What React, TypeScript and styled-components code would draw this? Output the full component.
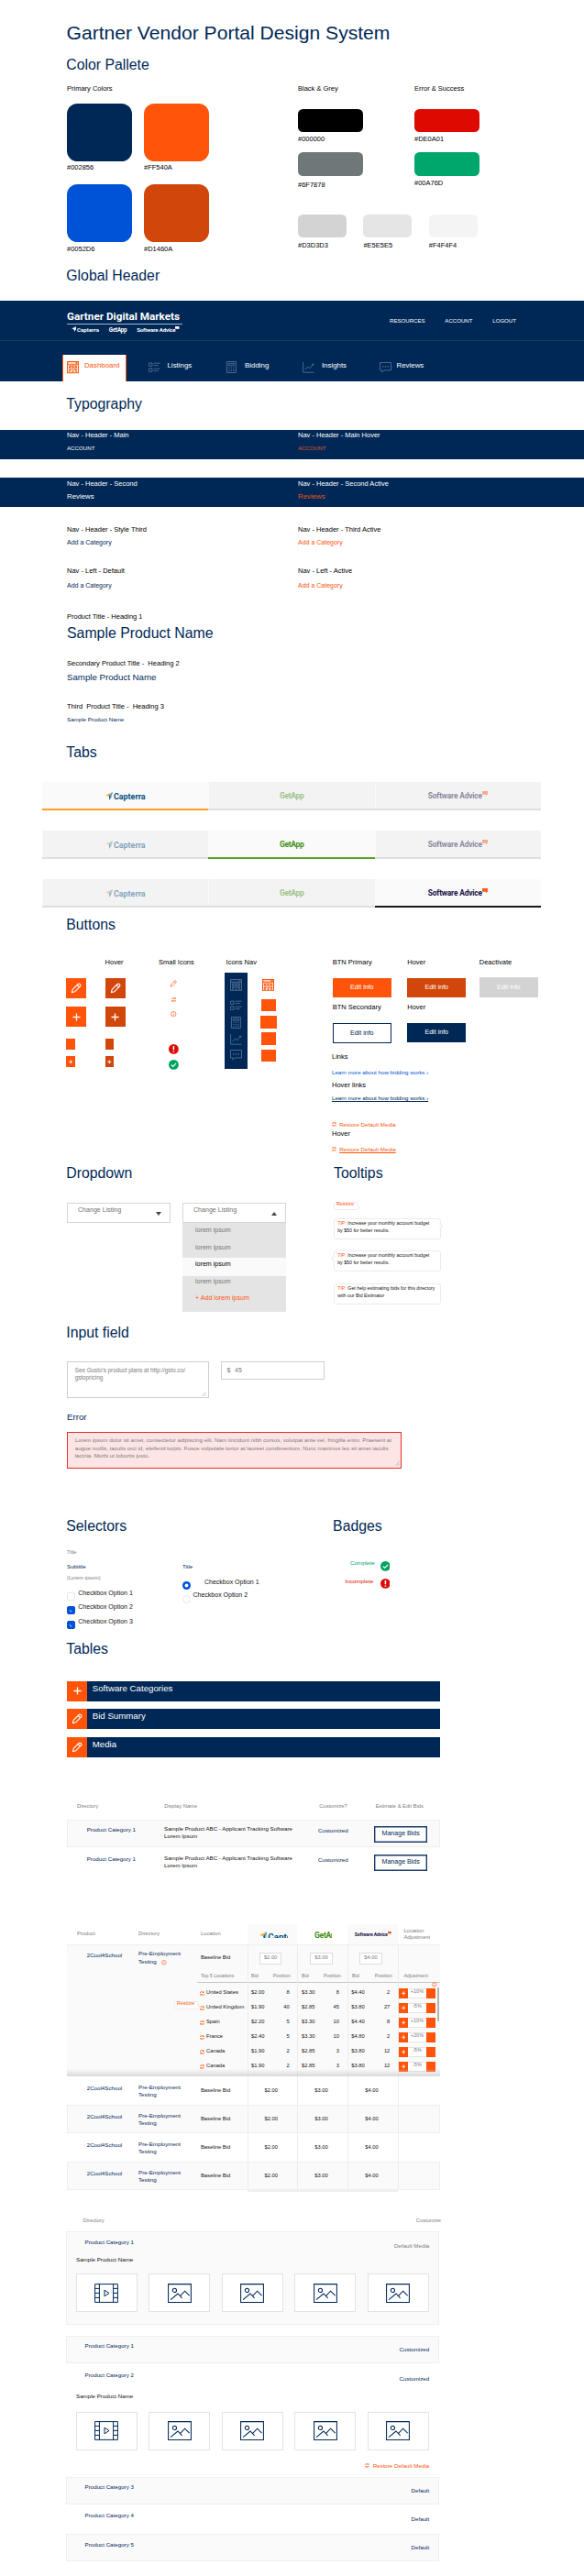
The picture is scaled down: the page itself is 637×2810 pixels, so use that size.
import React from "react";
import styled, { createGlobalStyle, css } from "styled-components";

const c = {
  navy: "#002856",
  orange: "#ff540a",
  blue: "#0052d6",
  rust: "#d1460a",
  black: "#000000",
  red: "#de0a01",
  green: "#00a76d",
  mute: "#7c7c7c",
  ink: "#111111",
  panel: "#fafafa",
  rule: "#efefef",
};

const GlobalStyle = createGlobalStyle`
  body { margin: 0; background: #fff; }
  * { box-sizing: border-box; }
`;

const Page = styled.main`
  width: 637px;
  height: 2810px;
  overflow: hidden;
  background: #fff;
  font-family: "Liberation Sans", Arial, sans-serif;
  display: flex;
  flex-direction: column;
`;

/* ---------- type ---------- */

const Title = styled.h1`
  margin: 23px 0 -0.6px 72.5px;
  font-size: 21.1px;
  line-height: 26px;
  font-weight: 400;
  color: ${c.navy};
  white-space: nowrap;
`;

const Heading = styled.h2<{ $mt?: number; $w?: number }>`
  margin: ${(p) => (p.$mt ?? 0) + 0.7}px 0 -0.7px 72.3px;
  font-size: 15.8px;
  line-height: 20px;
  font-weight: 400;
  color: ${c.navy};
  white-space: nowrap;
  ${(p) => p.$w && `width: ${p.$w}px;`}
`;

const HeadingRow = styled.div<{ $mt?: number }>`
  display: flex;
  margin-top: ${(p) => p.$mt ?? 0}px;
  h2 + h2 {
    margin-left: 0;
  }
`;

type TextProps = {
  $size?: number;
  $color?: string;
  $mt?: number;
  $lh?: number;
  $underline?: boolean;
};
const Text = styled.span<TextProps>`
  display: block;
  flex: none;
  margin-top: ${(p) => (p.$mt ?? 0) + 0.4}px;
  margin-bottom: -0.4px;
  font-size: ${(p) => p.$size ?? 6.2}px;
  line-height: ${(p) => p.$lh ?? 10}px;
  color: ${(p) => p.$color ?? c.navy};
  white-space: pre;
  text-decoration: ${(p) => (p.$underline ? "underline" : "none")};
  text-decoration-thickness: 0.5px;
  text-underline-offset: 1px;
`;

const Label = styled(Text).attrs<TextProps>((p) => ({
  $size: 7.5,
  $color: p.$color ?? c.black,
}))``;

/* ---------- colour palette ---------- */

const Palette = styled.div`
  display: flex;
  margin: 11.9px 0 0 73px;
  height: 198.8px;
`;
const PrimaryColumn = styled.div`
  width: 252px;
`;
const PrimaryGrid = styled.div`
  display: grid;
  grid-template-columns: 70.5px 70.5px;
  column-gap: 13.5px;
  row-gap: 13.1px;
  margin-top: 11.3px;
`;
const Chip = styled.div<{ $bg: string; $large?: boolean; $mt?: number }>`
  margin-top: ${(p) => p.$mt ?? 0}px;
  height: ${(p) => (p.$large ? 62.5 : 25.3)}px;
  width: 100%;
  background: ${(p) => p.$bg};
  border-radius: ${(p) => (p.$large ? 11.5 : 5.5)}px;
`;
const PairColumns = styled.div`
  display: grid;
  grid-template-columns: 71px 70.5px;
  column-gap: 56px;
  height: 141.8px;
`;
const LightRow = styled.div`
  display: grid;
  grid-template-columns: repeat(3, 53px);
  column-gap: 18.4px;
`;

/* ---------- global header ---------- */

const HeaderBar = styled.header`
  margin-top: 17px;
  height: 88.2px;
  background: ${c.navy};
`;
const HeaderTop = styled.div`
  height: 44.4px;
  padding: 0 74px 0 73px;
  border-bottom: 1px solid #173a66;
  display: flex;
  justify-content: space-between;
`;
const Brand = styled.div`
  width: 126px;
  padding-top: 9px;
`;
const BrandName = styled.div`
  font: 700 11.7px/16px Roboto, sans-serif;
  letter-spacing: 0.02px;
  color: #fff;
  white-space: nowrap;
  border-bottom: 1px solid #a9b5c5;
`;
const BrandLogos = styled.div`
  display: flex;
  justify-content: space-between;
  padding: 2px 3px 0 5px;
  align-items: flex-start;
`;
const TopLinks = styled.nav`
  width: 138px;
  padding-top: 17px;
  display: flex;
  justify-content: space-between;
`;
const NavRow = styled.nav`
  display: flex;
  align-items: flex-end;
  height: 43.8px;
  padding-left: 68.3px;
`;
const NavItem = styled.a<{ $active?: boolean; $icon: number }>`
  display: flex;
  height: 29px;
  width: 84px;
  padding-top: 6.8px;
  svg {
    display: block;
    margin: 1px ${(p) => p.$icon - 13}px 0 0;
  }
  ${(p) =>
    p.$active &&
    css`
      width: 69.7px;
      margin-right: 24.5px;
      padding-left: 4px;
      background: #fff;
      border: solid ${c.orange};
      border-width: 0 1px;
    `}
`;

/* ---------- typography ---------- */

const Band = styled.div<{ $mt: number }>`
  margin-top: ${(p) => p.$mt}px;
  height: 32.6px;
  padding: 1.5px 0 0 73px;
  background: ${c.navy};
  display: grid;
  grid-template-columns: 252px 1fr;
  align-content: start;
`;
const Specimens = styled.div<{ $mt: number }>`
  margin-top: ${(p) => p.$mt}px;
  padding-left: 73px;
  display: grid;
  grid-template-columns: 252px 1fr;
`;

/* ---------- brand tabs ---------- */

const TabStrip = styled.div<{ $mt: number }>`
  display: grid;
  grid-template-columns: 181.2px 181.5px 181px;
  margin: ${(p) => p.$mt}px 0 0 46.3px;
  height: 31px;
`;
const Tab = styled.div<{ $line: string; $on?: boolean }>`
  background: ${(p) => (p.$on ? "#fafafa" : "#f3f3f3")};
  border-bottom: 2px solid ${(p) => (p.$on ? p.$line : "#dfdfdf")};
  box-shadow: ${(p) => (p.$on ? "none" : "inset 1px 0 #fafafa")};
  display: flex;
  justify-content: center;
  padding-top: 10px;
  > * {
    opacity: ${(p) => (p.$on ? 1 : 0.48)};
  }
`;
const LogoMark = styled.div<{ $size: number; $color: string; $ls?: number }>`
  display: flex;
  align-items: flex-start;
  flex: none;
  font-family: Roboto, sans-serif;
  font-weight: 700;
  font-size: ${(p) => p.$size}px;
  line-height: ${(p) => p.$size * 1.4}px;
  letter-spacing: ${(p) => p.$ls ?? 0}px;
  color: ${(p) => p.$color};
  white-space: nowrap;
  svg {
    flex: none;
  }
`;

/* ---------- buttons ---------- */

const ButtonsBody = styled.div`
  display: flex;
  margin-top: 26.2px;
  height: 224.8px;
  padding-left: 72.3px;
`;
const Column = styled.div<{ $w: number; $pt?: number }>`
  width: ${(p) => p.$w}px;
  padding-top: ${(p) => p.$pt ?? 0}px;
  flex: none;
`;
const IconButton = styled.div<{ $hover?: boolean; $small?: boolean; $mt: number }>`
  margin-top: ${(p) => p.$mt}px;
  width: ${(p) => (p.$small ? 9.6 : 22)}px;
  height: ${(p) => (p.$small ? 12 : 22)}px;
  background: ${(p) => (p.$hover ? c.rust : c.orange)};
  display: flex;
  align-items: center;
  justify-content: center;
`;
const LabelSpace = styled.div`
  height: 10px;
`;
const Slot = styled.div<{ $h: number; $mt?: number }>`
  height: ${(p) => p.$h}px;
  margin-top: ${(p) => p.$mt ?? 0}px;
  width: 33px;
  display: flex;
  align-items: center;
  justify-content: center;
`;
const NavIcons = styled.div`
  display: flex;
  margin: 6.6px 0 0 -1.2px;
`;
const NavPanel = styled.div`
  width: 24.4px;
  height: 105px;
  padding-top: 2.3px;
  background: ${c.navy};
  ${Slot} {
    width: 24.4px;
  }
`;
const NavActive = styled.div`
  margin-left: 14.2px;
  width: 18px;
  padding-top: 6.6px;
  display: flex;
  flex-direction: column;
  align-items: center;
`;
const NavSquare = styled.div<{ $w: number; $mt: number }>`
  width: ${(p) => p.$w}px;
  height: 13.7px;
  margin-top: ${(p) => p.$mt}px;
  background: ${c.orange};
`;
const ButtonGrid = styled.div`
  display: grid;
  grid-template-columns: 81.5px 78.5px 64px;
  margin-left: 0.8px;
`;
const Button = styled.button<{ $bg: string; $fg?: string; $mt: number }>`
  display: flex;
  justify-content: center;
  align-items: flex-start;
  margin: ${(p) => p.$mt}px 0 0;
  padding: 4.6px 0 0;
  width: 64px;
  height: 21.9px;
  border: 1px solid ${(p) => p.$fg ?? p.$bg};
  background: ${(p) => p.$bg};
  color: ${(p) => p.$fg ?? "#fff"};
  font: 400 7.1px/10px "Liberation Sans", Arial, sans-serif;
`;
const IconText = styled.div<{ $mt: number; $gap?: number }>`
  display: flex;
  margin-top: ${(p) => p.$mt}px;
  align-items: center;
  gap: ${(p) => p.$gap ?? 3.4}px;
`;

/* ---------- dropdown + tooltips ---------- */

const DropdownBody = styled.div`
  display: flex;
  height: 154px;
  padding: 21.1px 0 0 73px;
`;
const SelectColumn = styled.div`
  margin-top: 1.7px;
  width: 126px;
`;
const Select = styled.div`
  display: flex;
  justify-content: space-between;
  width: 113px;
  height: 21.7px;
  border: 1px solid #d6d6d6;
  padding: 1.2px 9px 0 11px;
`;
const Caret = styled.i<{ $up?: boolean }>`
  width: 0;
  height: 0;
  margin-top: 7.5px;
  border: 3px solid transparent;
  ${(p) =>
    p.$up
      ? "border-top: 0; border-bottom: 4px solid #444;"
      : "border-bottom: 0; border-top: 4px solid #444;"}
`;
const Menu = styled.div`
  width: 113px;
  height: 97.3px;
  background: #e4e4e4;
`;
const MenuItem = styled.div<{ $h: number; $pt: number; $on?: boolean }>`
  height: ${(p) => p.$h}px;
  padding: ${(p) => p.$pt}px 0 0 14px;
  background: ${(p) => (p.$on ? "#fafafa" : "transparent")};
`;
const Tooltips = styled.div`
  margin-left: 38.6px;
`;
const Tip = styled.div<{ $tail: "left" | "right" | "top"; $mt?: number; $small?: boolean }>`
  position: relative;
  margin-top: ${(p) => p.$mt ?? 0}px;
  width: ${(p) => (p.$small ? 27 : 117)}px;
  height: ${(p) => (p.$small ? 9.6 : 23.6)}px;
  padding: ${(p) => (p.$small ? "0 0 0 2.3px" : "1px 0 0 3.6px")};
  border: 1px solid #ececec;
  border-radius: 3px;
  background: #fff;
  &::after {
    content: "";
    position: absolute;
    width: ${(p) => (p.$small ? 2.6 : 4.4)}px;
    height: ${(p) => (p.$small ? 2.6 : 4.4)}px;
    background: #fff;
    border: solid #ececec;
    border-width: 1px 1px 0 0;
    ${(p) =>
      p.$tail === "right" &&
      `right: ${p.$small ? -2 : -3}px; top: ${p.$small ? 3 : 5}px; transform: rotate(45deg);`}
    ${(p) => p.$tail === "left" && "left: -3px; top: 5px; transform: rotate(-135deg);"}
    ${(p) => p.$tail === "top" && "left: 91px; top: -3px; transform: rotate(-45deg);"}
  }
`;
const TipWord = styled.b`
  font-weight: 400;
  color: ${c.orange};
`;
const TipLabel = styled(Text)`
  margin-top: -2px;
`;

/* ---------- inputs ---------- */

const Fields = styled.div`
  display: flex;
  gap: 13.8px;
  align-items: flex-start;
  margin: 21.8px 0 0 73px;
`;
const TextArea = styled.div<{ $error?: boolean; $w: number }>`
  display: flex;
  justify-content: space-between;
  width: ${(p) => p.$w}px;
  height: 40px;
  padding: ${(p) => (p.$error ? 3.5 : 4.8)}px 1.5px 1.5px 7.7px;
  border: 1px solid ${(p) => (p.$error ? "#e5302a" : "#cfcfcf")};
  background: ${(p) => (p.$error ? "#fce5e4" : "#fff")};
  > svg {
    align-self: flex-end;
  }
`;
const Money = styled.div`
  display: flex;
  gap: 4.6px;
  width: 112.4px;
  height: 19.6px;
  padding: 3.6px 0 0 5.2px;
  border: 1px solid #cfcfcf;
`;
const ErrorBlock = styled.div`
  margin: 14.3px 0 0 73px;
  display: grid;
  row-gap: 10.4px;
`;

/* ---------- selectors ---------- */

const SelectorsBody = styled.div`
  display: flex;
  height: 114px;
  padding-left: 73px;
`;
const OptionRow = styled.div<{ $h: number; $gap: number }>`
  display: flex;
  align-items: flex-start;
  height: ${(p) => p.$h}px;
  gap: ${(p) => p.$gap}px;
`;
const CheckBox = styled.span<{ $on?: boolean }>`
  flex: none;
  width: 9.3px;
  height: 9.3px;
  margin-top: 4.4px;
  border-radius: 2px;
  border: 1px solid ${(p) => (p.$on ? c.blue : "#e6e6e6")};
  background: ${(p) => (p.$on ? c.blue : "#fff")};
  svg {
    display: block;
  }
`;
const Radio = styled.span<{ $on?: boolean }>`
  flex: none;
  width: 9px;
  height: 9px;
  margin-top: 4.9px;
  border-radius: 50%;
  border: 1px solid #e6e6e6;
  background: #fff;
  ${(p) => p.$on && `border: 0; background: radial-gradient(#fff 1.7px, ${c.blue} 2.3px);`}
`;
const BadgeRow = styled.div<{ $gap: number }>`
  display: flex;
  justify-content: flex-end;
  width: 62.3px;
  height: 19.4px;
  gap: ${(p) => p.$gap}px;
  svg {
    display: block;
    margin-top: 3.2px;
  }
`;

/* ---------- title bars ---------- */

const TitleBars = styled.div`
  display: grid;
  row-gap: 8.3px;
  margin: 25.5px 0 0 73px;
  width: 407px;
`;
const TitleBar = styled.div`
  display: flex;
  gap: 5.7px;
  height: 22.2px;
  background: ${c.navy};
`;

/* ---------- directory table ---------- */

const TableHead = styled.div`
  display: grid;
  grid-template-columns: 106.3px 169px 61.4px 70px;
  margin: 47.8px 0 10px 73px;
`;
const DirectoryRow = styled.div<{ $shade?: boolean }>`
  display: grid;
  grid-template-columns: 105px 168px 61px 71px;
  margin: 0 0 0.6px 73px;
  width: 407px;
  height: 30.7px;
  padding-top: 5.5px;
  border: 1px solid ${(p) => (p.$shade ? c.rule : "transparent")};
  background: ${(p) => (p.$shade ? c.panel : "#fff")};
`;
const Inset = styled.div<{ $l?: number; $t?: number }>`
  padding: ${(p) => p.$t ?? 0}px 0 0 ${(p) => p.$l ?? 0}px;
`;
const ManageButton = styled.button`
  display: flex;
  justify-content: center;
  align-items: flex-start;
  margin: 0.6px 0 0;
  padding: 2.1px 0 0;
  width: 58.4px;
  height: 18px;
  border: 1px solid #1b3c6c;
  box-shadow: inset 0 0 0 0.4px #1b3c6c;
  background: #fff;
  color: ${c.navy};
  font: 400 7.08px/10px "Liberation Sans", Arial, sans-serif;
`;

/* ---------- bids table ---------- */

const BidTable = styled.div`
  margin: 51.7px 0 0 73px;
  width: 407px;
`;
const bidCols = "50.5px 54.3px 55.4px 54.5px 46.3px";
const BidHeader = styled.div`
  display: grid;
  grid-template-columns: 78px 68px ${bidCols};
  height: 22.7px;
`;
const LogoCell = styled.div<{ $shade?: boolean; $l: number; $t?: number }>`
  background: ${(p) => (p.$shade ? c.panel : "#fff")};
  padding: ${(p) => p.$t ?? 7.3}px 0 0 ${(p) => p.$l}px;
`;
const LogoClip = styled.div<{ $w: number; $h: number }>`
  width: ${(p) => p.$w}px;
  height: ${(p) => p.$h}px;
  overflow: hidden;
`;
const Expanded = styled.div`
  position: relative;
  display: grid;
  grid-template-columns: 78px 68px 261px;
  height: 144px;
  overflow: hidden;
  background: ${c.panel};
  border-top: 1px solid ${c.rule};
`;
const BidCells = styled.div<{ $h: number }>`
  display: grid;
  grid-template-columns: ${bidCols};
  height: ${(p) => p.$h}px;
  > * + * {
    border-left: 1px solid #ededed;
  }
`;
const Underline = styled.div`
  height: 1px;
  margin-left: -4px;
  background: #c8c8c8;
`;
const PairCell = styled.div<{ $l: number; $r: number; $t: number }>`
  display: flex;
  justify-content: space-between;
  padding: ${(p) => p.$t}px ${(p) => p.$r}px 0 ${(p) => p.$l}px;
`;
const BidInput = styled.div`
  width: 24.4px;
  height: 13.4px;
  border: 1px solid #dcdcdc;
  background: #fff;
  display: flex;
  justify-content: center;
`;
const NameCell = styled.div`
  display: flex;
  gap: 1.6px;
  padding-top: 4px;
  margin-left: -0.6px;
  svg {
    margin-top: 4.6px;
    flex: none;
  }
`;
const Stepper = styled.div`
  display: grid;
  grid-template-columns: 9.7px 20.3px 9.8px;
  padding: 5.4px 0 0 0.4px;
  align-items: start;
`;
const StepEnd = styled.div`
  height: 11.4px;
  background: ${c.orange};
  display: flex;
  align-items: center;
  justify-content: center;
`;
const StepValue = styled.div`
  height: 11.4px;
  border: solid #e4e4e4;
  border-width: 1px 0;
  background: #fff;
  display: flex;
  justify-content: center;
`;
const ScrollThumb = styled.div`
  position: absolute;
  right: 1.3px;
  top: 46px;
  width: 2px;
  height: 37px;
  background: #b4b4b4;
  border-radius: 1px;
`;
const Fade = styled.div`
  position: absolute;
  left: 0;
  right: 0;
  bottom: 0;
  height: 8px;
  background: linear-gradient(rgba(215, 215, 215, 0), rgba(215, 215, 215, 0.95));
`;
const BidRow = styled.div<{ $shade?: boolean }>`
  display: grid;
  grid-template-columns: 78px 68px 261px;
  height: 31px;
  background: ${(p) => (p.$shade ? c.panel : "#fff")};
  box-shadow: ${(p) => (p.$shade ? `inset 0 0 0 1px ${c.rule}` : "none")};
`;
const PriceCell = styled.div`
  display: flex;
  justify-content: center;
  padding: 9px 3px 0 0;
`;
const ColumnFoot = styled.div`
  width: 164px;
  height: 2px;
  margin-left: 196.5px;
  background: #efefef;
`;
const InlineIcon = styled.span`
  display: inline-block;
  margin-left: 5.4px;
  vertical-align: -2.6px;
  height: 6px;
  svg {
    display: block;
  }
`;

/* ---------- media table ---------- */

const MediaHead = styled.div`
  display: flex;
  justify-content: space-between;
  width: 390.4px;
  margin: 25px 0 0 90.6px;
`;
const MediaPanel = styled.div<{ $shade?: boolean; $mt: number; $h: number }>`
  margin: ${(p) => p.$mt}px 0 0 72px;
  width: 406.8px;
  height: ${(p) => p.$h}px;
  padding: 5.3px 9.6px 0 10px;
  border: 1px solid ${(p) => (p.$shade ? c.rule : "transparent")};
  background: ${(p) => (p.$shade ? c.panel : "#fff")};
`;
const MediaTitle = styled.div`
  display: flex;
  justify-content: space-between;
  height: 14px;
  padding-left: 9.6px;
  > :last-child {
    margin-top: 4.3px;
  }
`;
const Thumbs = styled.div<{ $mt: number }>`
  display: grid;
  grid-template-columns: repeat(5, 66.6px);
  column-gap: 12.9px;
  margin-top: ${(p) => p.$mt}px;
`;
const Thumb = styled.div`
  height: 41.8px;
  border: 1px solid #e3e3e3;
  background: #fff;
  display: flex;
  align-items: center;
  justify-content: center;
`;
const RestoreRow = styled(IconText)`
  justify-content: flex-end;
`;

/* ---------- icons ---------- */

const Plus = ({ size = 9, w = 1.4 }) => (
  <svg width={size} height={size} viewBox="0 0 10 10" stroke="#fff" strokeWidth={w} fill="none">
    <path d="M5 .5v9M.5 5h9" />
  </svg>
);
const Pencil = ({ size = 12, color = "#fff", w = 1.1 }) => (
  <svg width={size} height={size} viewBox="0 0 12 12" stroke={color} strokeWidth={w} fill="none" strokeLinejoin="round">
    <path d="M1.4 10.6l.8-3.2 5.9-5.9c.6-.6 1.4-.6 2 0l.4.4c.6.6.6 1.4 0 2L4.6 9.8zM7.2 2.5l2.3 2.3" />
  </svg>
);
const Refresh = ({ size = 6 }) => (
  <svg width={size} height={size} viewBox="0 0 12 12" stroke={c.orange} strokeWidth="1.9" fill="none">
    <path d="M1.2 5V3.6c0-1 .7-1.6 1.6-1.6H9M10.8 7v1.4c0 1-.7 1.6-1.6 1.6H3" />
    <path d="M10.8.2v4.4H6.4zM1.2 11.8V7.4h4.4z" fill={c.orange} stroke="none" />
  </svg>
);
const Info = ({ size = 6.4 }) => (
  <svg width={size} height={size} viewBox="0 0 12 12" stroke={c.orange} strokeWidth="1.2" fill="none">
    <circle cx="6" cy="6" r="5.2" />
    <path d="M6 5.2V9M6 2.9v1.3" strokeWidth="1.3" />
  </svg>
);
const Alert = () => (
  <svg width="10.8" height="10.8" viewBox="0 0 12 12">
    <circle cx="6" cy="6" r="6" fill={c.red} />
    <path d="M6 2.2v4.7M6 8.2v1.6" stroke="#fff" strokeWidth="1.7" />
  </svg>
);
const Tick = () => (
  <svg width="10.8" height="10.8" viewBox="0 0 12 12">
    <circle cx="6" cy="6" r="6" fill="#00a25f" />
    <path d="M3.1 6.2l2.1 2.1 3.8-4" stroke="#fff" strokeWidth="1.3" fill="none" />
  </svg>
);
const DashboardIcon = ({ color = "#5c789b", w = 0.9 }) => (
  <svg width="13" height="13.4" viewBox="0 0 13 13.4" stroke={color} strokeWidth={w} fill="none">
    <path d="M.6.6h11.8v12.2H.6zM.6 3.2h11.8M9.6 1.9h1.6M2 5h9M2 6.4h2.4M5.4 6.4h2.2M8.6 6.4H11M2 8h9M2 9.6h2.6M6 9.6h1.4M8.4 9.6H11M2 11.2h2M5.2 11.2h2.6M9 11.2h2" />
  </svg>
);
const ListIcon = ({ color = "#5c789b" }) => (
  <svg width="13" height="13" viewBox="0 0 13 13" stroke={color} strokeWidth=".8" fill="none">
    <path d="M.6 2h3.4v3.4H.6zM.6 8h3.4v3.4H.6zM5.6 2.2h7M5.6 4.6h5M5.6 8.2h7M5.6 10.6h5" />
  </svg>
);
const CalcIcon = ({ color = "#5c789b" }) => (
  <svg width="13" height="13" viewBox="0 0 13 13" stroke={color} strokeWidth=".8" fill="none">
    <path d="M1.4.5h10v12h-10zM3.2 2.3h6.4v2H3.2zM3.2 6.2h1.4M5.7 6.2h1.4M8.2 6.2h1.4M3.2 8.4h1.4M5.7 8.4h1.4M3.2 10.6h1.4M5.7 10.6h1.4M8.9 7.8v3.2" />
  </svg>
);
const ChartIcon = ({ color = "#5c789b" }) => (
  <svg width="13" height="13" viewBox="0 0 13 13" stroke={color} strokeWidth=".8" fill="none">
    <path d="M.6 1v11.2h12M2.6 9.4l3-3.4 2 1.8 4-4.4M10 3.2h1.8v1.8" />
  </svg>
);
const ChatIcon = ({ color = "#5c789b" }) => (
  <svg width="13" height="13" viewBox="0 0 13 13" stroke={color} strokeWidth=".8" fill="none">
    <path d="M.5 1.5h12v8.4H5L2.8 12V9.9H.5z" />
    <path d="M3 5.8h1.3M5.8 5.8h1.3M8.6 5.8h1.3" strokeWidth="1.2" />
  </svg>
);
const Grip = () => (
  <svg width="5" height="5" viewBox="0 0 5 5" stroke="#999" strokeWidth=".6">
    <path d="M.4 4.8L4.8.4M2.8 4.8l2-2" />
  </svg>
);
const FilmIcon = () => (
  <svg width="26" height="21" viewBox="0 0 26 21" stroke={c.navy} strokeWidth="1" fill="none">
    <path d="M.6.6h24.8v19.8H.6zM5.4.6v19.8M20.6.6v19.8M.6 5.4h4.8M.6 10.4h4.8M.6 15.4h4.8M20.6 5.4h4.8M20.6 10.4h4.8M20.6 15.4h4.8M11 7.2v6.6l5-3.3z" />
  </svg>
);
const PictureIcon = () => (
  <svg width="26" height="21" viewBox="0 0 26 21" stroke={c.navy} strokeWidth="1.05" fill="none">
    <path d="M.6.6h24.8v19.8H.6zM3 17.6L11 11l4.6 4.8M13.4 13.6L18.6 8.2l5 5" />
    <circle cx="7.4" cy="7.4" r="2.1" />
  </svg>
);
const Arrow = ({ size, mono }: { size: number; mono?: boolean }) => (
  <svg width={size * 0.87} height={size} viewBox="0 0 8.7 10">
    <path d="M0 4L8.7 0 4.4 5z" fill={mono ? "#fff" : "#ff9d28"} />
    <path d="M8.7 0L3.8 4.9l1.6 1z" fill={mono ? "#fff" : "#68c5ed"} />
    <path d="M8.7 0L5 10 4.4 5.2z" fill={mono ? "#fff" : "#044d80"} />
    <path d="M8.7 0L7.4 7 5.4 5.2z" fill={mono ? "#fff" : "#68c5ed"} />
  </svg>
);
const Bubble = ({ size, color = "#fc5d1f" }: { size: number; color?: string }) => (
  <svg width={size} height={size * 0.85} viewBox="0 0 10 8.5">
    <path d="M0 0h10v6H8v2.5L5.4 6H0z" fill={color} />
  </svg>
);

/* ---------- logos ---------- */

const CapterraMark = styled(LogoMark)`
  gap: ${(p) => p.$size * 0.1}px;
  svg {
    margin-top: ${(p) => p.$size * 0.13}px;
  }
`;
const CapterraLogo = ({ size = 8.9, mono = false }) => (
  <CapterraMark $size={size} $color={mono ? "#fff" : "#044d80"} $ls={mono ? 0.05 : 0}>
    <Arrow size={size * 1.02} mono={mono} />
    <span>Capterra</span>
  </CapterraMark>
);
const GetAppLogo = ({ size = 8.5, mono = false }) => (
  <LogoMark $size={size} $color={mono ? "#fff" : "#3f8f0f"} $ls={-0.35 * (size / 8.5)}>
    GetApp
  </LogoMark>
);
const AdviceLogo = ({ size = 8.4, mono = false }) => (
  <LogoMark $size={size} $color={mono ? "#fff" : "#150f45"} $ls={-0.02 * size}>
    <span>Software Advice</span>
    <Bubble size={size * 0.75} color={mono ? "#fff" : undefined} />
  </LogoMark>
);

/* ---------- data ---------- */

const locations: [string, string, string, string, string, string, string, string][] = [
  ["United States", "$2.00", "8", "$3.30", "8", "$4.40", "2", "+10%"],
  ["United Kingdom", "$1.90", "40", "$2.85", "45", "$3.80", "27", "-5%"],
  ["Spain", "$2.20", "5", "$3.30", "10", "$4.40", "8", "+10%"],
  ["France", "$2.40", "5", "$3.30", "10", "$4.80", "2", "+20%"],
  ["Canada", "$1.90", "2", "$2.85", "3", "$3.80", "12", "-5%"],
  ["Canada", "$1.90", "2", "$2.85", "3", "$3.80", "12", "-5%"],
  ["Canada", "$1.90", "2", "$2.85", "3", "$3.80", "12", "-5%"],
];

const Swatch = ({ hex, large, mt, gap }: { hex: string; large?: boolean; mt?: number; gap: number }) => (
  <div>
    <Chip $bg={hex} $large={large} $mt={mt} />
    <Label $mt={gap}>{hex.toUpperCase()}</Label>
  </div>
);

const BrandTabs = ({ active, mt }: { active: number; mt: number }) => (
  <TabStrip $mt={mt}>
    <Tab $on={active === 0} $line="#ff9d28"><CapterraLogo /></Tab>
    <Tab $on={active === 1} $line="#5ba32b"><GetAppLogo /></Tab>
    <Tab $on={active === 2} $line="#1b1525"><AdviceLogo /></Tab>
  </TabStrip>
);

const RestoreLink = ({ mt, underline }: { mt: number; underline?: boolean }) => (
  <IconText $mt={mt}>
    <Refresh size={4.8} />
    <Text $color={c.orange} $underline={underline}>Restore Default Media</Text>
  </IconText>
);

const TipCard = ({ tail, mt, lines }: { tail: "left" | "right" | "top"; mt: number; lines: [string, string] }) => (
  <Tip $tail={tail} $mt={mt}>
    <Text $size={5.25} $lh={7.6} $color={c.ink}>
      <TipWord>TIP:</TipWord> {lines[0]}
      {"\n" + lines[1]}
    </Text>
  </Tip>
);

const MediaRow = ({ n, state, shade, mt }: { n: number; state: string; shade?: boolean; mt: number }) => (
  <MediaPanel $mt={mt} $h={30.5} $shade={shade}>
    <MediaTitle>
      <Text>Product Category {n}</Text>
      <Text>{state}</Text>
    </MediaTitle>
  </MediaPanel>
);

const ThumbRow = ({ mt }: { mt: number }) => (
  <Thumbs $mt={mt}>
    <Thumb><FilmIcon /></Thumb>
    {[1, 2, 3, 4].map((i) => (
      <Thumb key={i}><PictureIcon /></Thumb>
    ))}
  </Thumbs>
);

export default function App() {
  return (
    <Page>
      <GlobalStyle />
      <Title>Gartner Vendor Portal Design System</Title>
      <Heading $mt={11.4}>Color Pallete</Heading>
      <Palette>
        <PrimaryColumn>
          <Label>Primary Colors</Label>
          <PrimaryGrid>
            <Swatch large hex="#002856" gap={2.4} />
            <Swatch large hex="#ff540a" gap={2.4} />
            <Swatch large hex="#0052d6" gap={2.9} />
            <Swatch large hex="#d1460a" gap={2.9} />
          </PrimaryGrid>
        </PrimaryColumn>
        <div>
          <PairColumns>
            <div>
              <Label>Black &amp; Grey</Label>
              <Swatch hex="#000000" mt={17.3} gap={2.8} />
              <Swatch hex="#6f7878" mt={9.2} gap={5.3} />
            </div>
            <div>
              <Label>Error &amp; Success</Label>
              <Swatch hex="#de0a01" mt={17.3} gap={2.8} />
              <Swatch hex="#00a76d" mt={9.2} gap={3.1} />
            </div>
          </PairColumns>
          <LightRow>
            <Swatch hex="#d3d3d3" gap={3.6} />
            <Swatch hex="#e5e5e5" gap={3.6} />
            <Swatch hex="#f4f4f4" gap={3.6} />
          </LightRow>
        </div>
      </Palette>

      <Heading>Global Header</Heading>
      <HeaderBar>
        <HeaderTop>
          <Brand>
            <BrandName>Gartner Digital Markets</BrandName>
            <BrandLogos>
              <CapterraLogo size={6.1} mono />
              <GetAppLogo size={6.3} mono />
              <AdviceLogo size={6} mono />
            </BrandLogos>
          </Brand>
          <TopLinks>
            <Text $size={6.1} $color="#fff">RESOURCES</Text>
            <Text $size={6.1} $color="#fff">ACCOUNT</Text>
            <Text $size={6.1} $color="#fff">LOGOUT</Text>
          </TopLinks>
        </HeaderTop>
        <NavRow>
          <NavItem $active $icon={18.6}>
            <DashboardIcon color={c.orange} w={1.1} />
            <Text $size={7.9} $color={c.orange}>Dashboard</Text>
          </NavItem>
          <NavItem $icon={20}>
            <ListIcon />
            <Text $size={7.9} $color="#fff">Listings</Text>
          </NavItem>
          <NavItem $icon={20.6}>
            <CalcIcon />
            <Text $size={7.9} $color="#fff">Bidding</Text>
          </NavItem>
          <NavItem $icon={20.4}>
            <ChartIcon />
            <Text $size={7.9} $color="#fff">Insights</Text>
          </NavItem>
          <NavItem $icon={18}>
            <ChatIcon />
            <Text $size={7.9} $color="#fff">Reviews</Text>
          </NavItem>
        </NavRow>
      </HeaderBar>

      <Heading $mt={14.8}>Typography</Heading>
      <Band $mt={18}>
        <Label $color="#fff">Nav - Header - Main</Label>
        <Label $color="#fff">Nav - Header - Main Hover</Label>
        <Text $size={6.17} $mt={3.9} $color="#fff">ACCOUNT</Text>
        <Text $size={6.17} $mt={3.9} $color="#e0541a">ACCOUNT</Text>
      </Band>
      <Band $mt={19.8}>
        <Label $color="#fff">Nav - Header - Second</Label>
        <Label $color="#fff">Nav - Header - Second Active</Label>
        <Text $size={7.85} $mt={3.9} $color="#fff">Reviews</Text>
        <Text $size={7.85} $mt={3.9} $color="#e0541a">Reviews</Text>
      </Band>
      <Specimens $mt={18.8}>
        <Label>Nav - Header - Style Third</Label>
        <Label>Nav - Header - Third Active</Label>
        <Text $size={7} $mt={4.2}>Add a Category</Text>
        <Text $size={7} $mt={4.2} $color={c.orange}>Add a Category</Text>
      </Specimens>
      <Specimens $mt={20.8}>
        <Label>Nav - Left - Default</Label>
        <Label>Nav - Left - Active</Label>
        <Text $size={7} $mt={6.2}>Add a Category</Text>
        <Text $size={7} $mt={6.2} $color={c.orange}>Add a Category</Text>
      </Specimens>
      <Specimens $mt={24.5}>
        <div>
          <Label>Product Title - Heading 1</Label>
          <Text $size={15.87} $lh={20} $mt={2.9}>Sample Product Name</Text>
          <Label $mt={18.1}>{"Secondary Product Title -  Heading 2"}</Label>
          <Text $size={9.7} $lh={12} $mt={3.8}>Sample Product Name</Text>
          <Label $mt={20.8}>{"Third  Product Title -  Heading 3"}</Label>
          <Text $size={6.2} $mt={4.2}>Sample Product Name</Text>
        </div>
      </Specimens>

      <Heading $mt={20.7}>Tabs</Heading>
      <BrandTabs active={0} mt={22.5} />
      <BrandTabs active={1} mt={21.8} />
      <BrandTabs active={2} mt={21.8} />

      <Heading $mt={8.9}>Buttons</Heading>
      <ButtonsBody>
        <Column $w={42.3}>
          <LabelSpace />
          <IconButton $mt={12.6}><Pencil /></IconButton>
          <IconButton $mt={9}><Plus /></IconButton>
          <IconButton $small $mt={13} />
          <IconButton $small $mt={7}><Plus size={4.6} w={2} /></IconButton>
        </Column>
        <Column $w={58.4}>
          <Label>Hover</Label>
          <IconButton $hover $mt={12.6}><Pencil /></IconButton>
          <IconButton $hover $mt={9}><Plus /></IconButton>
          <IconButton $hover $small $mt={13} />
          <IconButton $hover $small $mt={7}><Plus size={4.6} w={2} /></IconButton>
        </Column>
        <Column $w={73.6}>
          <Label>Small Icons</Label>
          <Slot $mt={10} $h={17.2}><Pencil size={8} color={c.orange} w={1} /></Slot>
          <Slot $h={17}><Refresh size={5} /></Slot>
          <Slot $h={14.2}><Info /></Slot>
          <Slot $mt={22} $h={19}><Alert /></Slot>
          <Slot $h={14.4}><Tick /></Slot>
        </Column>
        <Column $w={115.4}>
          <Label>Icons Nav</Label>
          <NavIcons>
            <NavPanel>
              <Slot $h={22}><DashboardIcon /></Slot>
              <Slot $h={22}><ListIcon /></Slot>
              <Slot $h={15.4}><CalcIcon /></Slot>
              <Slot $h={21.2}><ChartIcon /></Slot>
              <Slot $h={13.6}><ChatIcon /></Slot>
            </NavPanel>
            <NavActive>
              <DashboardIcon color={c.orange} w={1.2} />
              <NavSquare $w={16.4} $mt={8.3} />
              <NavSquare $w={18} $mt={5} />
              <NavSquare $w={16.4} $mt={4.3} />
              <NavSquare $w={16.4} $mt={4.6} />
            </NavActive>
          </NavIcons>
        </Column>
        <Column $w={230}>
          <ButtonGrid>
            <Label>BTN Primary</Label>
            <Label>Hover</Label>
            <Label>Deactivate</Label>
            <Button $bg={c.orange} $mt={11.9}>Edit info</Button>
            <Button $bg={c.rust} $mt={11.9}>Edit info</Button>
            <Button $bg="#d3d3d3" $mt={11.7}>Edit info</Button>
            <Label $mt={5.2}>BTN Secondary</Label>
            <Label $mt={5.2}>Hover</Label>
            <i />
            <Button $bg="#fff" $fg={c.navy} $mt={12.8}>Edit info</Button>
            <Button $bg={c.navy} $mt={11.9}>Edit info</Button>
          </ButtonGrid>
          <Label $mt={9.6}>Links</Label>
          <Text $mt={6.5} $color={c.blue}>Learn more about how bidding works ›</Text>
          <Label $mt={4.2}>Hover links</Label>
          <Text $mt={3.8} $underline>Learn more about how bidding works ›</Text>
          <RestoreLink mt={19.4} />
          <Label $mt={0.1}>Hover</Label>
          <RestoreLink mt={6.5} underline />
        </Column>
      </ButtonsBody>

      <HeadingRow>
        <Heading $w={291.7}>Dropdown</Heading>
        <Heading>Tooltips</Heading>
      </HeadingRow>
      <DropdownBody>
        <SelectColumn>
          <Select>
            <Text $size={7.07} $color="#707070">Change Listing</Text>
            <Caret />
          </Select>
        </SelectColumn>
        <SelectColumn>
          <Select>
            <Text $size={7.07} $color="#707070">Change Listing</Text>
            <Caret $up />
          </Select>
          <Menu>
            <MenuItem $h={19} $pt={2.8}><Text $size={7.1} $color="#757575">lorem ipsum</Text></MenuItem>
            <MenuItem $h={19} $pt={2.5}><Text $size={7.1} $color="#757575">lorem ipsum</Text></MenuItem>
            <MenuItem $h={20.3} $pt={1.8} $on><Text $size={7.1} $color={c.black}>lorem ipsum</Text></MenuItem>
            <MenuItem $h={18} $pt={0}><Text $size={7.1} $color="#757575">lorem ipsum</Text></MenuItem>
            <MenuItem $h={21} $pt={0}><Text $size={7.1} $color={c.orange}>+ Add lorem ipsum</Text></MenuItem>
          </Menu>
        </SelectColumn>
        <Tooltips>
          <Tip $tail="right" $small>
            <TipLabel $size={5.45} $lh={7} $color={c.orange}>Restore</TipLabel>
          </Tip>
          <TipCard tail="right" mt={8.4} lines={["Increase your monthly account budget", "by $50 for better results."]} />
          <TipCard tail="left" mt={11.5} lines={["Increase your monthly account budget", "by $50 for better results."]} />
          <TipCard tail="top" mt={12.4} lines={["Get help estimating bids for this directory", "with our Bid Estimator"]} />
        </Tooltips>
      </DropdownBody>

      <Heading>Input field</Heading>
      <Fields>
        <TextArea $w={154.5}>
          <Text $size={6.3} $lh={8} $color={c.mute}>{"See Gusto's product plans at http://gsto.co/\ngstopricing"}</Text>
          <Grip />
        </TextArea>
        <Money>
          <Text $size={7} $color="#757575">$</Text>
          <Text $size={7} $color="#757575">45</Text>
        </Money>
      </Fields>
      <ErrorBlock>
        <Text $size={9.7} $lh={12}>Error</Text>
        <TextArea $w={365} $error>
          <Text $size={6.2} $lh={8.7} $color={c.mute}>
            {"Lorem ipsum dolor sit amet, consectetur adipiscing elit. Nam tincidunt nibh cursus, volutpat ante vel, fringilla enim. Praesent at\naugue mollis, iaculis orci id, eleifend turpis. Fusce vulputate tortor at laoreet condimentum. Nunc maximus leo sit amet iaculis\nlacinia. Morbi ut lobortis justo."}
          </Text>
          <Grip />
        </TextArea>
      </ErrorBlock>

      <HeadingRow $mt={52.1}>
        <Heading $w={290.8}>Selectors</Heading>
        <Heading>Badges</Heading>
      </HeadingRow>
      <SelectorsBody>
        <Column $w={126} $pt={14}>
          <Text $size={5.6} $color={c.mute}>Title</Text>
          <Text $size={6.2} $mt={5.7}>Subtitle</Text>
          <Text $size={5.7} $mt={2.2} $color={c.mute}>(Lorem ipsum)</Text>
          <Inset $t={6.2}>
            {[1, 2, 3].map((n) => (
              <OptionRow key={n} $h={15.6} $gap={3}>
                <CheckBox $on={n > 1}>
                  {n > 1 && (
                    <svg width="7.3" height="7.3" viewBox="0 0 8 8" stroke="#fff" strokeWidth="1" fill="none">
                      <path d="M2.4 3.6l2 2.4" />
                    </svg>
                  )}
                </CheckBox>
                <Text $size={7} $color={c.ink}>Checkbox Option {n}</Text>
              </OptionRow>
            ))}
          </Inset>
        </Column>
        <Column $w={164} $pt={29.8}>
          <Text $size={6}>Title</Text>
          <Inset $t={6.3}>
            <OptionRow $h={14.7} $gap={15}>
              <Radio $on />
              <Text $size={7} $color={c.ink}>Checkbox Option 1</Text>
            </OptionRow>
            <OptionRow $h={14.7} $gap={2.5}>
              <Radio />
              <Text $size={7} $color={c.ink}>Checkbox Option 2</Text>
            </OptionRow>
          </Inset>
        </Column>
        <Column $w={80} $pt={25.7}>
          <BadgeRow $gap={5.7}>
            <Text $size={6.25} $color={c.green}>Complete</Text>
            <Tick />
          </BadgeRow>
          <BadgeRow $gap={7.4}>
            <Text $size={6.25} $color={c.red}>Incomplete</Text>
            <Alert />
          </BadgeRow>
        </Column>
      </SelectorsBody>

      <Heading>Tables</Heading>
      <TitleBars>
        {["Software Categories", "Bid Summary", "Media"].map((t, i) => (
          <TitleBar key={t}>
            <IconButton $mt={0}>{i ? <Pencil /> : <Plus />}</IconButton>
            <Text $size={9.7} $lh={12} $mt={1.6} $color="#fff">{t}</Text>
          </TitleBar>
        ))}
      </TitleBars>

      <TableHead>
        <Inset $l={11}><Text $size={5.75} $color={c.mute}>Directory</Text></Inset>
        <Text $size={5.75} $color={c.mute}>Display Name</Text>
        <Text $size={5.75} $color={c.mute}>Customize?</Text>
        <Text $size={5.75} $color={c.mute}>Estimate &amp; Edit Bids</Text>
      </TableHead>
      {[true, false].map((shade, i) => (
        <DirectoryRow key={i} $shade={shade}>
          <Inset $l={20.7}><Text>Product Category 1</Text></Inset>
          <Text $lh={8} $color={c.ink}>{"Sample Product ABC - Applicant Tracking Software\nLorem Ipsum"}</Text>
          <Text $mt={1}>Customized</Text>
          <ManageButton>Manage Bids</ManageButton>
        </DirectoryRow>
      ))}

      <BidTable>
        <BidHeader>
          <Inset $l={11} $t={4.4}><Text $size={5.75} $color={c.mute}>Product</Text></Inset>
          <Inset $t={4.4}><Text $size={5.75} $color={c.mute}>Directory</Text></Inset>
          <Inset $t={4.4}><Text $size={5.75} $color={c.mute}>Location</Text></Inset>
          <LogoCell $shade $l={13.2}>
            <LogoClip $w={31.6} $h={7.6}><CapterraLogo size={9.8} /></LogoClip>
          </LogoCell>
          <LogoCell $l={19.3} $t={6.2}>
            <LogoClip $w={19.2} $h={8.6}><GetAppLogo size={8.6} /></LogoClip>
          </LogoCell>
          <LogoCell $shade $l={7.6} $t={8}><AdviceLogo size={5.1} /></LogoCell>
          <Inset $l={6.7} $t={3.7}><Text $size={5.75} $lh={7.3} $color={c.mute}>{"Location\nAdjustment"}</Text></Inset>
        </BidHeader>
        <Expanded>
          <Inset $l={21.7} $t={5.2}><Text>2Cool4School</Text></Inset>
          <Inset $t={4.6}>
            <Text $lh={8.2}>
              {"Pre-Employment\nTesting"}
              <InlineIcon><Info size={5.6} /></InlineIcon>
            </Text>
            <Inset $l={38.7} $t={39}>
              <Tip $tail="right" $small>
                <TipLabel $size={5.45} $lh={7} $color={c.orange}>Restore</TipLabel>
              </Tip>
            </Inset>
          </Inset>
          <div>
            <BidCells $h={27.3}>
              <Text $size={5.8} $color={c.ink} $mt={6.7}>Baseline Bid</Text>
              <Inset $l={12.4} $t={7.3}><BidInput><Text $size={5.75} $lh={8} $color={c.mute}>$2.00</Text></BidInput></Inset>
              <Inset $l={13.4} $t={7.3}><BidInput><Text $size={5.75} $lh={8} $color={c.mute}>$3.00</Text></BidInput></Inset>
              <Inset $l={12} $t={7.3}><BidInput><Text $size={5.75} $lh={8} $color={c.mute}>$4.00</Text></BidInput></Inset>
              <i />
            </BidCells>
            <BidCells $h={12.4}>
              <Text $size={5.2} $color={c.mute}>Top 5 Locations</Text>
              <PairCell $l={3.6} $r={7.2} $t={0}><Text $size={5.3} $color={c.mute}>Bid</Text><Text $size={5.3} $color={c.mute}>Position</Text></PairCell>
              <PairCell $l={4.2} $r={7.4} $t={0}><Text $size={5.3} $color={c.mute}>Bid</Text><Text $size={5.3} $color={c.mute}>Position</Text></PairCell>
              <PairCell $l={3.8} $r={6} $t={0}><Text $size={5.3} $color={c.mute}>Bid</Text><Text $size={5.3} $color={c.mute}>Position</Text></PairCell>
              <PairCell $l={5.8} $r={3.2} $t={0}><Text $size={5.3} $color={c.mute}>Adjustment</Text><Inset $t={4}><Info size={5.6} /></Inset></PairCell>
            </BidCells>
            <Underline />
            {locations.map((r, i) => (
              <BidCells key={i} $h={16}>
                <NameCell>
                  <Refresh size={5} />
                  <Text $size={5.8} $color={c.ink}>{r[0]}</Text>
                </NameCell>
                <PairCell $l={3.6} $r={8.2} $t={4}><Text $size={5.75} $color={c.ink}>{r[1]}</Text><Text $size={5.75} $color={c.ink}>{r[2]}</Text></PairCell>
                <PairCell $l={4.2} $r={9.3} $t={4}><Text $size={5.75} $color={c.ink}>{r[3]}</Text><Text $size={5.75} $color={c.ink}>{r[4]}</Text></PairCell>
                <PairCell $l={3} $r={8.4} $t={4}><Text $size={5.75} $color={c.ink}>{r[5]}</Text><Text $size={5.75} $color={c.ink}>{r[6]}</Text></PairCell>
                <Stepper>
                  <StepEnd><Plus size={4.6} w={2} /></StepEnd>
                  <StepValue><Text $size={5.5} $lh={7} $mt={-1} $color={c.mute}>{r[7]}</Text></StepValue>
                  <StepEnd />
                </Stepper>
              </BidCells>
            ))}
          </div>
          <ScrollThumb />
          <Fade />
        </Expanded>
        {[false, true, false, true].map((shade, i) => (
          <BidRow key={i} $shade={shade}>
            <Inset $l={21.7} $t={6.8}><Text>2Cool4School</Text></Inset>
            <Inset $t={6.7}><Text $lh={8.1}>{"Pre-Employment\nTesting"}</Text></Inset>
            <BidCells $h={31}>
              <Text $size={5.8} $color={c.ink} $mt={9}>Baseline Bid</Text>
              {["$2.00", "$3.00", "$4.00"].map((v) => (
                <PriceCell key={v}><Text $size={5.75} $color={c.ink}>{v}</Text></PriceCell>
              ))}
              <i />
            </BidCells>
          </BidRow>
        ))}
        <ColumnFoot />
      </BidTable>

      <MediaHead>
        <Text $size={5.75} $color={c.mute}>Directory</Text>
        <Text $size={5.75} $color={c.mute}>Customize</Text>
      </MediaHead>
      <MediaPanel $mt={8} $h={101.7} $shade>
        <MediaTitle>
          <Text>Product Category 1</Text>
          <Text $color={c.mute}>Default Media</Text>
        </MediaTitle>
        <Text $mt={5.2} $color={c.ink}>Sample Product Name</Text>
        <ThumbRow mt={10.4} />
      </MediaPanel>
      <MediaRow n={1} state="Customized" shade mt={11.6} />
      <MediaPanel $mt={1} $h={122.4}>
        <MediaTitle>
          <Text>Product Category 2</Text>
          <Text>Customized</Text>
        </MediaTitle>
        <Text $mt={9.4} $color={c.ink}>Sample Product Name</Text>
        <ThumbRow mt={11.9} />
        <RestoreRow $mt={12}>
          <Refresh size={4.8} />
          <Text $color={c.orange}>Restore Default Media</Text>
        </RestoreRow>
      </MediaPanel>
      <MediaRow n={3} state="Default" shade mt={0} />
      <MediaRow n={4} state="Default" mt={0.6} />
      <MediaRow n={5} state="Default" shade mt={0.6} />
    </Page>
  );
}
